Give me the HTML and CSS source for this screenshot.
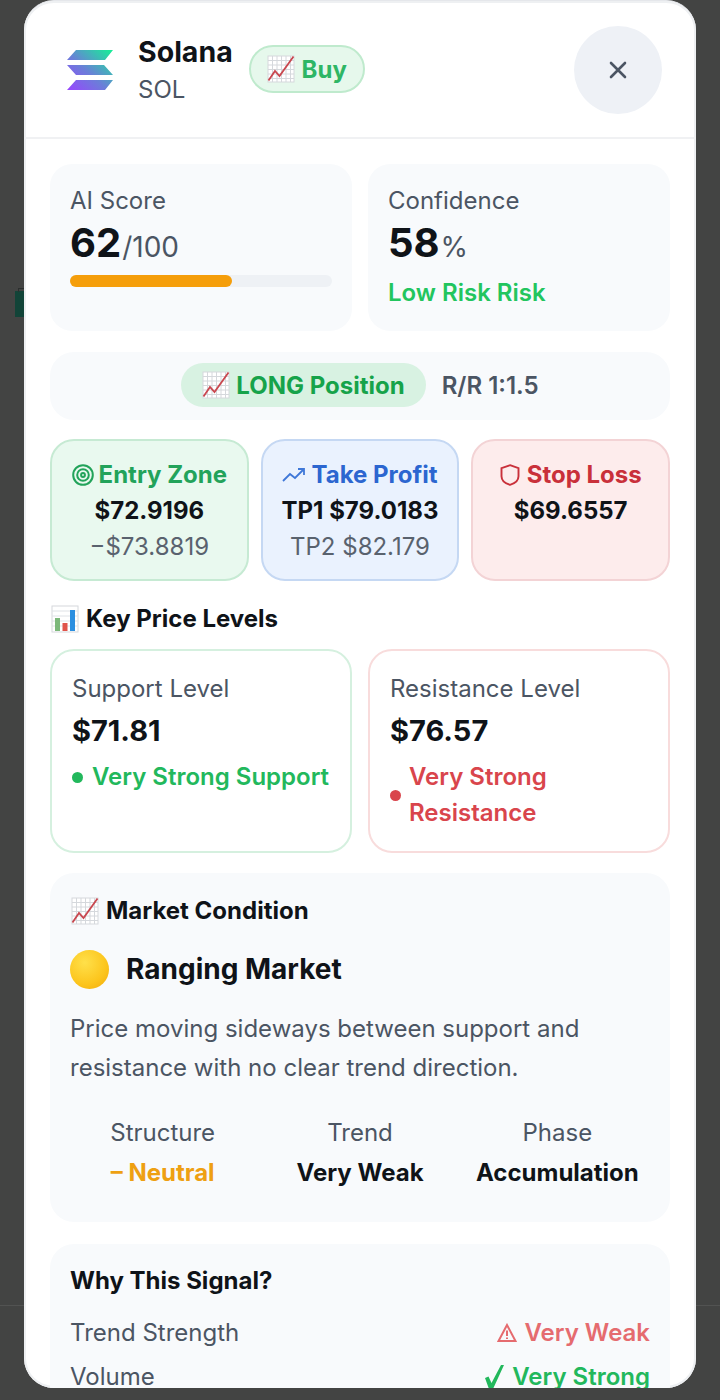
FILE: index.html
```html
<html>
<head>
    <title>Solana Signal</title>
    <meta charset="UTF-8">
    <meta name="viewport" content="width=device-width, initial-scale=1">
    <link rel="stylesheet" href="styles.css">
</head>
<body>
    <svg class="defs" width="0" height="0">
        <symbol id="chartup" viewBox="0 0 28 28">
            <rect x="1" y="1" width="26" height="26" fill="#fff" stroke="#d5d8dc"/>
            <path d="M5.5 1v26M10 1v26M14.500 1v26M19 1v26M23.500 1v26M1 5.500h26M1 10h26M1 14.500h26M1 19h26M1 23.500h26" stroke="#d5d8dc" stroke-width="1" fill="none"/>
            <path d="M1.500 25.500 8 16l4.500 5L26.500 1.500" stroke="#c9474f" stroke-width="1.800" fill="none"/>
        </symbol>
        <symbol id="barchart" viewBox="0 0 28 28">
            <rect x="1" y="1" width="26" height="26" fill="#fff" stroke="#d5d8dc"/>
            <path d="M1 6h26M1 11h26M1 16h26M1 21h26" stroke="#dfe2e6" fill="none"/>
            <rect x="4" y="13" width="5" height="13" fill="#7cb87a"/>
            <rect x="11.500" y="18" width="5" height="8" fill="#e0534a"/>
            <rect x="19" y="5" width="5" height="21" fill="#2b8fe0"/>
        </symbol>
        <linearGradient id="solgrad" x1="0" y1="1" x2="1" y2="0">
            <stop offset="0" stop-color="#9945ff"/>
            <stop offset="0.45" stop-color="#6a7fd8"/>
            <stop offset="1" stop-color="#14f195"/>
        </linearGradient>
    </svg>

    <div class="behind">
        <div class="bag"></div>
        <div class="behind-line"></div>
    </div>

    <div class="modal">
        <div class="header">
            <div class="coin">
                <svg width="46" height="40" viewBox="0 0 46 40">
                    <path fill="url(#solgrad)" d="M9 0h37l-8 10H0zM0 15h37l9 10H9zM9 30h37l-8 10H0z"/>
                </svg>
                <div class="coin-name">
                    <div class="name">Solana</div>
                    <div class="symbol">SOL</div>
                </div>
                <div class="badge-buy"><svg class="emoji"><use href="#chartup"/></svg>Buy</div>
            </div>
            <div class="close">
                <svg width="18" height="18" viewBox="0 0 18 18"><path d="M2 2l14 14M16 2 2 16" stroke="#4b5563" stroke-width="2.600" stroke-linecap="round"/></svg>
            </div>
        </div>

        <div class="content">
            <div class="two-col">
                <div class="score-card">
                    <div class="label">AI Score</div>
                    <div class="score-num"><b>62</b><span>/100</span></div>
                    <div class="bar"><div class="bar-fill" style="width: 62%"></div></div>
                </div>
                <div class="score-card">
                    <div class="label">Confidence</div>
                    <div class="score-num"><b>58</b><span>%</span></div>
                    <div class="risk">Low Risk Risk</div>
                </div>
            </div>

            <div class="position-row">
                <div class="position-pill"><svg class="emoji"><use href="#chartup"/></svg>LONG Position</div>
                <div class="rr">R/R 1:1.5</div>
            </div>

            <div class="three-col">
                <div class="zone zone-green">
                    <div class="zone-title">
                        <svg width="22" height="22" viewBox="0 0 22 22" fill="none" stroke="#22a35a" stroke-width="2"><circle cx="11" cy="11" r="9.800"/><circle cx="11" cy="11" r="5.800"/><circle cx="11" cy="11" r="1.900"/></svg>
                        Entry Zone
                    </div>
                    <div class="zone-value">$72.9196</div>
                    <div class="zone-sub">−$73.8819</div>
                </div>
                <div class="zone zone-blue">
                    <div class="zone-title">
                        <svg width="24" height="14" viewBox="0 0 24 14" fill="none" stroke="#3f78d8" stroke-width="1.800"><path d="M1 13l7-7 5 4 9-9M16 1h6v6"/></svg>
                        Take Profit
                    </div>
                    <div class="zone-value">TP1 $79.0183</div>
                    <div class="zone-sub">TP2 $82.179</div>
                </div>
                <div class="zone zone-red">
                    <div class="zone-title">
                        <svg width="20" height="22" viewBox="0 0 20 22" fill="none" stroke="#c9303a" stroke-width="1.900"><path d="M10 1.200l8.500 3v8c0 4.500-4 7.300-8.500 8.600C5.500 19.500 1.500 16.700 1.500 12.200v-8z"/></svg>
                        Stop Loss
                    </div>
                    <div class="zone-value">$69.6557</div>
                </div>
            </div>

            <div class="section-title levels-title"><svg class="emoji"><use href="#barchart"/></svg>Key Price Levels</div>
            <div class="two-col">
                <div class="level level-green">
                    <div class="label">Support Level</div>
                    <div class="level-price">$71.81</div>
                    <div class="level-status status-green"><i class="dot"></i><span>Very Strong Support</span></div>
                </div>
                <div class="level level-red">
                    <div class="label">Resistance Level</div>
                    <div class="level-price">$76.57</div>
                    <div class="level-status status-red"><i class="dot"></i><span>Very Strong Resistance</span></div>
                </div>
            </div>

            <div class="panel market">
                <div class="section-title"><svg class="emoji"><use href="#chartup"/></svg>Market Condition</div>
                <div class="market-state"><i class="yellow-circle"></i>Ranging Market</div>
                <div class="market-desc">Price moving sideways between support and resistance with no clear trend direction.</div>
                <div class="stats">
                    <div class="stat">
                        <div class="label">Structure</div>
                        <div class="stat-value orange">– Neutral</div>
                    </div>
                    <div class="stat">
                        <div class="label">Trend</div>
                        <div class="stat-value">Very Weak</div>
                    </div>
                    <div class="stat">
                        <div class="label">Phase</div>
                        <div class="stat-value">Accumulation</div>
                    </div>
                </div>
            </div>

            <div class="panel why">
                <div class="section-title">Why This Signal?</div>
                <div class="why-row">
                    <span class="label">Trend Strength</span>
                    <span class="why-value why-weak">
                        <svg width="20" height="20" viewBox="0 0 20 20" fill="none" stroke="#e56b6f" stroke-width="2"><path d="M10 2 1.500 18h17zM10 7.500v5.500M10 14.500v1.500"/></svg>
                        Very Weak
                    </span>
                </div>
                <div class="why-row">
                    <span class="label">Volume</span>
                    <span class="why-value why-strong">
                        <svg width="20" height="26" viewBox="0 0 20 26"><path fill="#22b85c" d="M17 1h3L9 25H5L1 14l3.500-1.500L7.500 19z"/></svg>
                        Very Strong
                    </span>
                </div>
            </div>
        </div>
    </div>
</body>
</html>
```

FILE: styles.css
```css
* {
    box-sizing: border-box;
}

html, body {
    margin: 0;
    height: 1400px;
    overflow: hidden;
}

body {
    background-color: #434443;
    font-family: Inter, "Liberation Sans", sans-serif;
    color: #0f1318;
    font-size: 24px;
}

.defs {
    position: absolute;
}

.behind {
    position: absolute;
    left: 0;
    top: 0;
    width: 100%;
}

.bag {
    position: absolute;
    left: 15px;
    top: 291px;
    width: 10px;
    height: 26px;
    background-color: #124438;
}

.bag::before {
    content: "";
    position: absolute;
    left: 3px;
    top: -3px;
    width: 7px;
    height: 3px;
    border: 1px solid #2b2f2e;
    border-bottom: none;
}

.behind-line {
    position: absolute;
    left: 0;
    top: 1305px;
    width: 100%;
    height: 1px;
    background-color: #525352;
}

.modal {
    position: relative;
    margin: 0 24px;
    height: 1388px;
    background-color: #fff;
    border-radius: 30px;
    overflow: hidden;
    border-top: 1px solid #e5e7eb;
    box-shadow: inset 0 0 0 2px #eef0f2;
}

.emoji {
    width: 28px;
    height: 28px;
    flex: none;
}

.header {
    height: 138px;
    padding: 25px 34px 0 43px;
    display: flex;
    justify-content: space-between;
    border-bottom: 2px solid #f0f1f3;
}

.coin {
    display: flex;
    align-items: center;
    height: 88px;
}

.coin-name {
    margin-left: 25px;
    margin-top: 2px;
}

.name {
    font-size: 28.5px;
    font-weight: 700;
    line-height: 36px;
}

.symbol {
    font-size: 24px;
    color: #4b5563;
    line-height: 38px;
    margin-top: 1px;
}

.badge-buy {
    margin-left: 16px;
    margin-top: -2px;
    width: 116px;
    height: 48px;
    display: flex;
    align-items: center;
    justify-content: center;
    gap: 7px;
    background-color: #e6f8ec;
    border: 2px solid #bfeacd;
    border-radius: 24px;
    color: #2eb665;
    font-weight: 700;
}

.close {
    width: 88px;
    height: 88px;
    border-radius: 50%;
    background-color: #eef1f6;
    display: flex;
    align-items: center;
    justify-content: center;
}

.content {
    padding: 25px 26px 0;
}

.two-col {
    display: grid;
    grid-template-columns: 1fr 1fr;
    gap: 16px;
}

.score-card {
    height: 167px;
    background-color: #f8fafc;
    border-radius: 22px;
    padding: 20px;
}

.label {
    color: #4b5563;
    line-height: 34px;
}

.score-num {
    line-height: 50px;
}

.score-num b {
    font-size: 40px;
    font-weight: 700;
}

.score-num span {
    font-size: 28px;
    color: #4b5563;
    margin-left: 1px;
}

.bar {
    height: 12px;
    margin-top: 3px;
    background-color: #eef1f5;
    border-radius: 6px;
}

.bar-fill {
    height: 100%;
    background-color: #f59e0b;
    border-radius: 6px;
}

.risk {
    color: #22c55e;
    font-weight: 600;
    margin-top: 4px;
    line-height: 34px;
}

.position-row {
    height: 68px;
    margin-top: 21px;
    padding-bottom: 2px;
    background-color: #f8fafc;
    border-radius: 24px;
    display: flex;
    align-items: center;
    justify-content: center;
    gap: 16px;
}

.position-pill {
    height: 44px;
    padding: 0 21px;
    display: flex;
    align-items: center;
    gap: 6px;
    background-color: #d8f2e2;
    border-radius: 22px;
    color: #16a34a;
    font-weight: 700;
}

.rr {
    color: #4b5563;
    font-weight: 600;
}

.three-col {
    display: grid;
    grid-template-columns: repeat(3, 1fr);
    gap: 12px;
    margin-top: 19px;
}

.zone {
    height: 142px;
    border-radius: 24px;
    border: 2px solid;
    padding: 17px 0 0;
    text-align: center;
}

.zone-green {
    background-color: #e9f9ef;
    border-color: #c6ead3;
    color: #22a35a;
}

.zone-blue {
    background-color: #eaf2fe;
    border-color: #c5d8f3;
    color: #2c66d0;
}

.zone-red {
    background-color: #fdecec;
    border-color: #f3d3d5;
    color: #c9303a;
}

.zone-title {
    font-weight: 700;
    line-height: 34px;
    display: flex;
    align-items: center;
    justify-content: center;
    gap: 5px;
}

.zone-red .zone-title {
    gap: 7px;
}

.zone-value {
    color: #0f1318;
    font-weight: 700;
    line-height: 36px;
    margin-top: 1px;
}

.zone-sub {
    color: #59626e;
    line-height: 34px;
    margin-top: 1px;
}

.section-title {
    font-weight: 700;
    line-height: 34px;
    display: flex;
    align-items: center;
    gap: 7px;
}

.section-title .emoji {
    margin-left: 1px;
}

.levels-title {
    margin: 21px 0 13px;
}

.level {
    height: 204px;
    border: 2px solid;
    border-radius: 24px;
    padding: 21px 20px 0;
}

.level-green {
    border-color: #d5f0df;
}

.level-red {
    border-color: #f8dcdc;
}

.level-price {
    font-size: 29px;
    font-weight: 700;
    line-height: 48px;
    margin-top: 1px;
}

.level-status {
    display: flex;
    align-items: center;
    gap: 9px;
    line-height: 36px;
    font-weight: 600;
    margin-top: 4px;
}

.status-green {
    color: #22b85c;
}

.status-red {
    color: #d9454c;
    gap: 8px;
}

.dot {
    width: 11px;
    height: 11px;
    border-radius: 50%;
    flex: none;
    background-color: currentColor;
}

.panel {
    background-color: #f8fafc;
    border-radius: 24px;
    padding: 20px;
}

.market {
    height: 349px;
    margin-top: 20px;
    padding-top: 21px;
}

.market-state {
    display: flex;
    align-items: center;
    gap: 17px;
    font-size: 28px;
    font-weight: 700;
    line-height: 40px;
    margin-top: 21px;
}

.yellow-circle {
    width: 39px;
    height: 39px;
    border-radius: 50%;
    background: radial-gradient(circle at 38% 32%, #ffe04a 0%, #fcc51d 60%, #f2a90a 100%);
}

.market-desc {
    color: #4b5563;
    line-height: 39px;
    margin-top: 20px;
}

.stats {
    display: grid;
    grid-template-columns: repeat(3, 1fr);
    gap: 12px;
    margin-top: 29px;
    text-align: center;
}

.stat-value {
    font-weight: 700;
    line-height: 36px;
    margin-top: 5px;
}

.orange {
    color: #eea012;
}

.why {
    margin-top: 22px;
    height: 300px;
}

.why-row {
    display: flex;
    justify-content: space-between;
    align-items: center;
    line-height: 44px;
}

.why .section-title {
    margin-bottom: 13px;
}

.why-value {
    display: flex;
    align-items: center;
    gap: 8px;
    font-weight: 600;
}

.why-weak {
    color: #e56b6f;
}

.why-strong {
    color: #22b85c;
}
```
